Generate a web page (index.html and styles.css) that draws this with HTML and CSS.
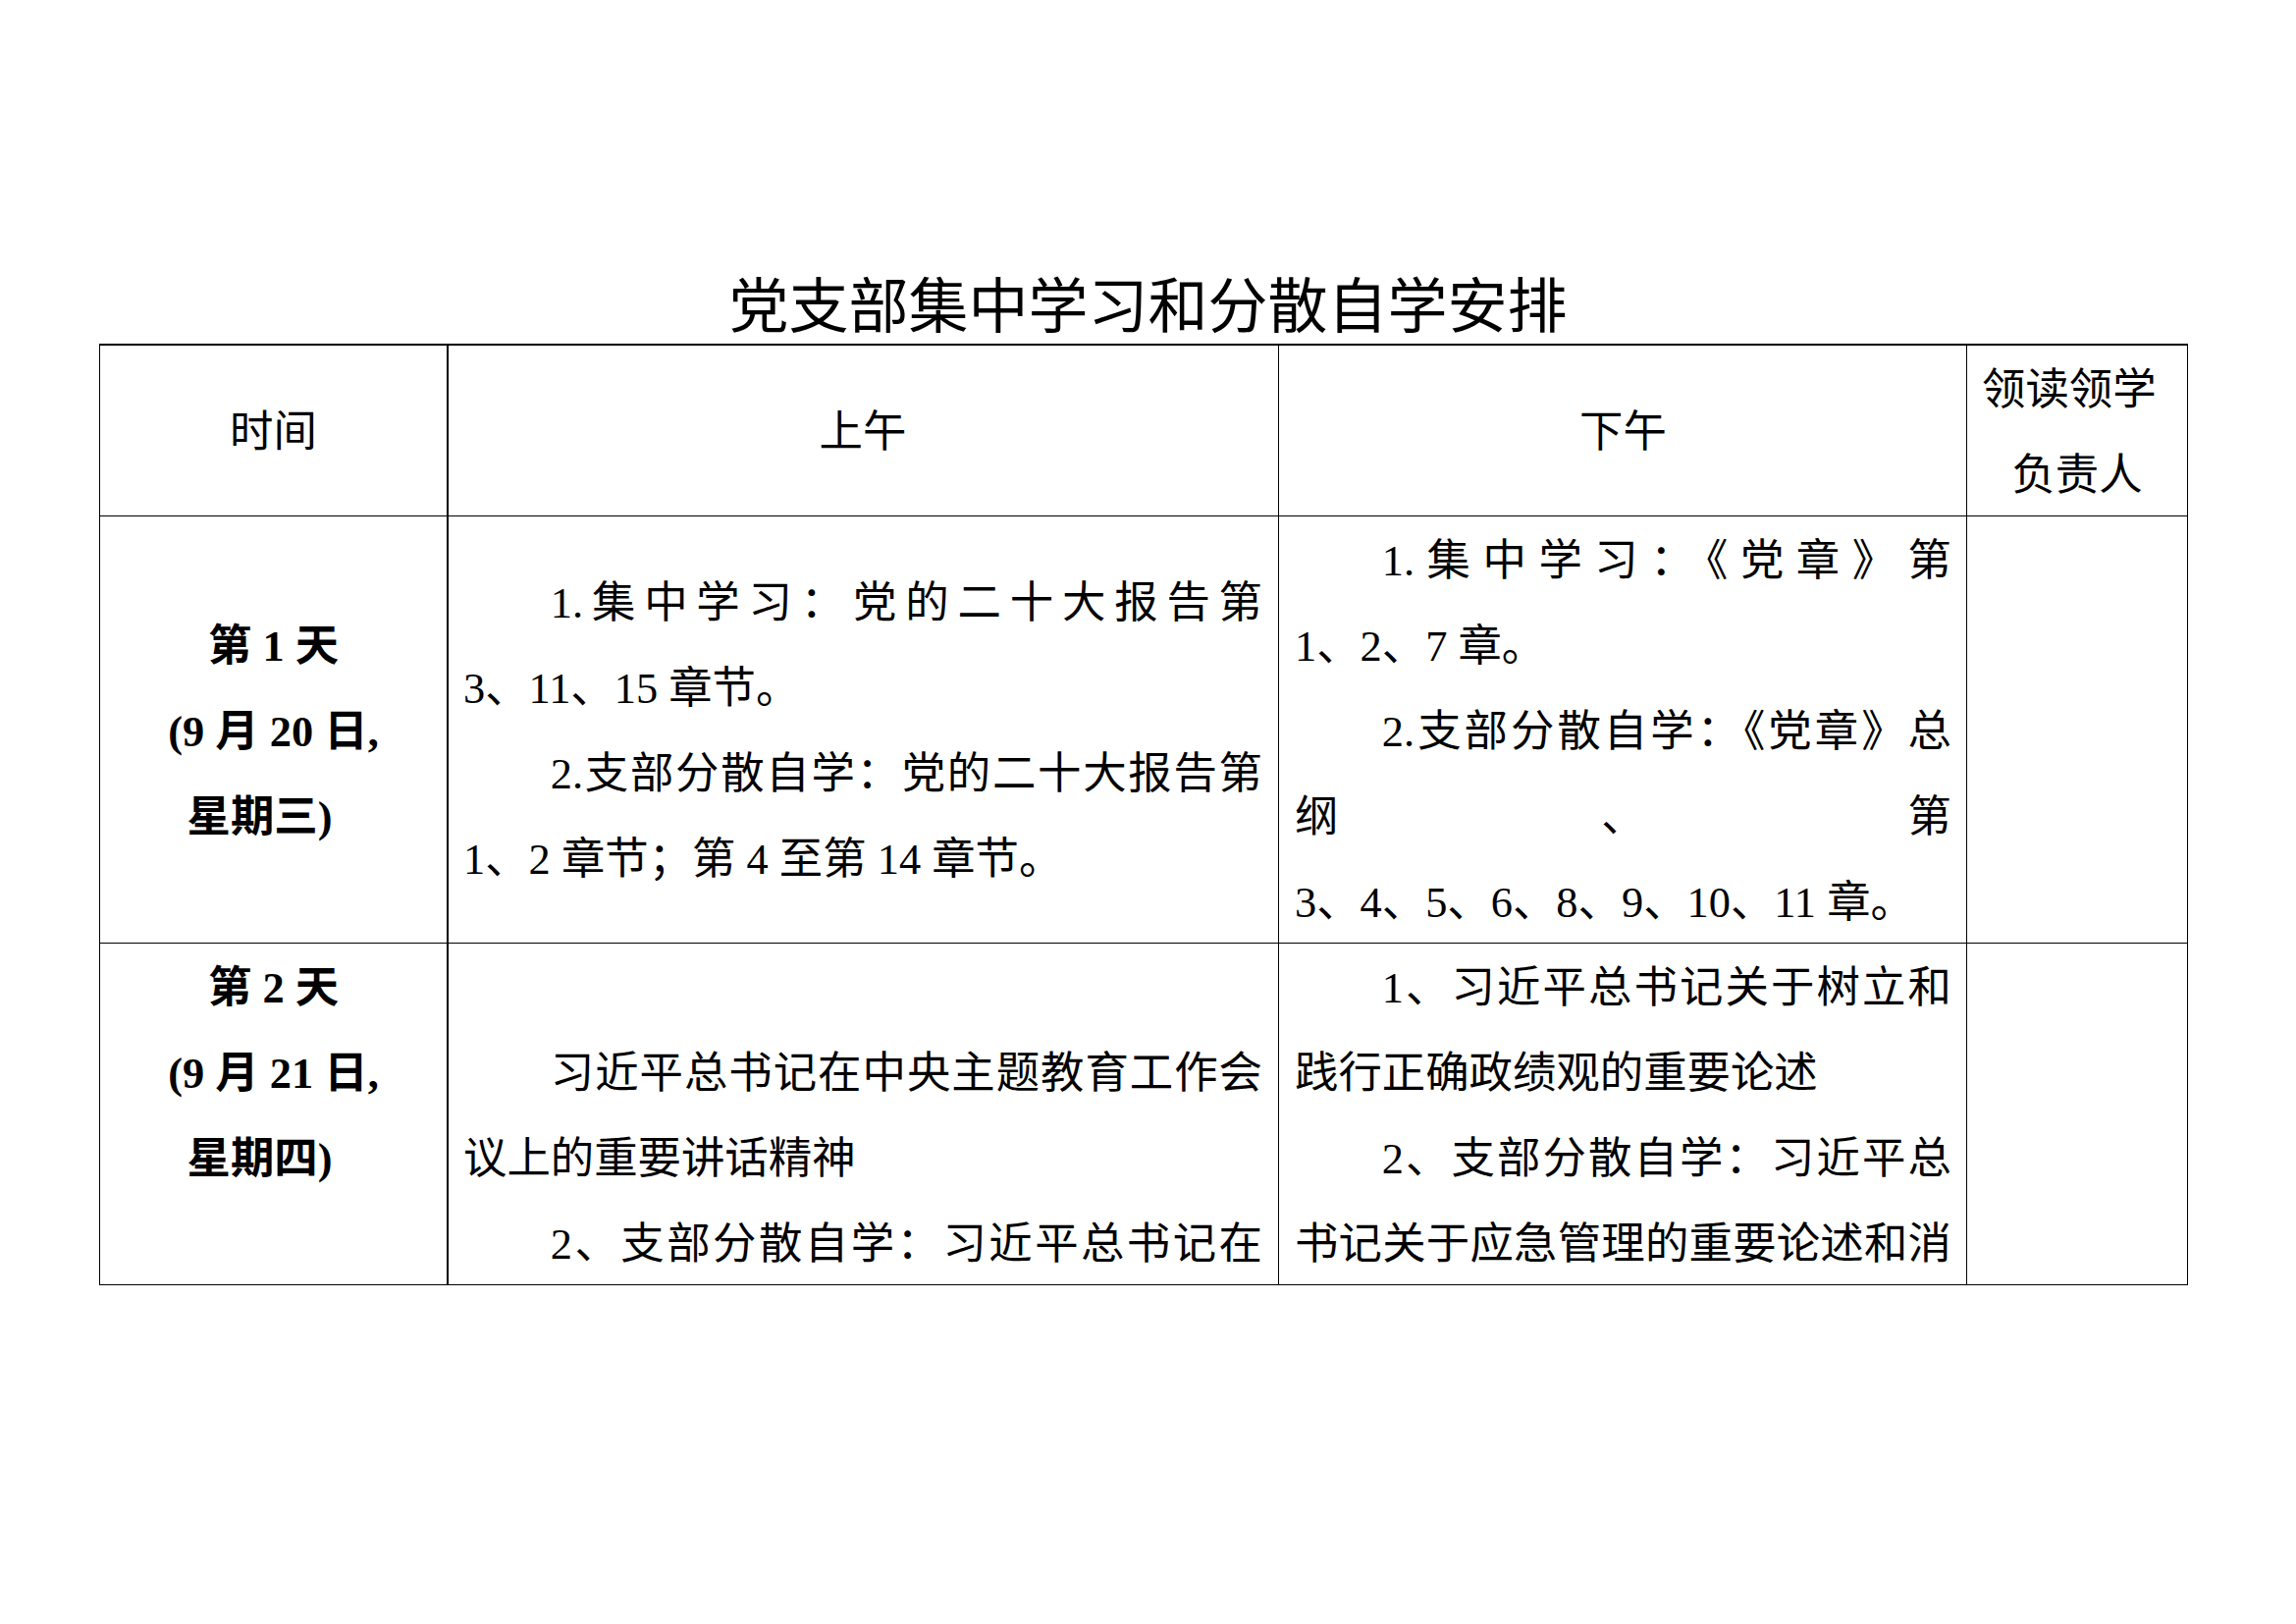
FILE: index.html
```html
<!DOCTYPE html>
<html lang="zh-CN">
<head>
<meta charset="utf-8">
<title>党支部集中学习和分散自学安排</title>
<link rel="stylesheet" href="styles.css">
</head>
<body>
<div class="doc">
  <h1 class="title">党支部集中学习和分散自学安排</h1>
  <div class="sheet">
    <div class="cell c1 head center"><div class="ln">时间</div></div>
    <div class="cell c2 head center"><div class="ln">上午</div></div>
    <div class="cell c3 head center"><div class="ln">下午</div></div>
    <div class="cell c4 head">
      <div class="ln left">领读领学</div>
      <div class="ln center">负责人</div>
    </div>

    <div class="cell c1 day center mid">
      <div class="ln">第 1 天</div>
      <div class="ln">(9 月 20 日,</div>
      <div class="ln shift">星期三)</div>
    </div>
    <div class="cell c2 mid">
      <div class="ln j ind">1.集中学习：党的二十大报告第</div>
      <div class="ln">3、11、15 章节。</div>
      <div class="ln j ind">2.支部分散自学：党的二十大报告第</div>
      <div class="ln">1、2 章节；第 4 至第 14 章节。</div>
    </div>
    <div class="cell c3 mid">
      <div class="ln j ind">1.集中学习：《党章》第</div>
      <div class="ln">1、2、7 章。</div>
      <div class="ln j ind">2.支部分散自学：《党章》总</div>
      <div class="ln j">纲、第</div>
      <div class="ln">3、4、5、6、8、9、10、11 章。</div>
    </div>
    <div class="cell c4"></div>

    <div class="cell c1 day center top">
      <div class="ln">第 2 天</div>
      <div class="ln">(9 月 21 日,</div>
      <div class="ln shift">星期四)</div>
    </div>
    <div class="cell c2 top">
      <div class="ln"></div>
      <div class="ln j ind">习近平总书记在中央主题教育工作会</div>
      <div class="ln">议上的重要讲话精神</div>
      <div class="ln j ind">2、支部分散自学：习近平总书记在</div>
    </div>
    <div class="cell c3 top">
      <div class="ln j ind">1、习近平总书记关于树立和</div>
      <div class="ln">践行正确政绩观的重要论述</div>
      <div class="ln j ind">2、支部分散自学：习近平总</div>
      <div class="ln j">书记关于应急管理的重要论述和消</div>
    </div>
    <div class="cell c4"></div>
  </div>
</div>
</body>
</html>
```

FILE: styles.css
```css
html, body {
  margin: 0;
  padding: 0;
  background: #ffffff;
}

body {
  width: 2339px;
  height: 1654px;
  color: #000000;
  font-family: "Liberation Serif", "Noto Sans CJK SC", serif;
}

.doc {
  padding-top: 263px;
}

.title {
  margin: 0;
  box-sizing: border-box;
  height: 87px;
  padding-top: 2px;
  line-height: 85px;
  text-align: center;
  font-family: "Noto Sans CJK SC", sans-serif;
  font-weight: 400;
  font-size: 61px;
}

.sheet {
  margin-left: 101px;
  width: 2128px;
  box-sizing: border-box;
  border-top: 2px solid #000;
  border-left: 1px solid #000;
  display: grid;
  grid-template-columns: 355px 846px 701px 225px;
  grid-template-rows: 174px 435px 348px;
}

.cell {
  box-sizing: border-box;
  border-right: 1px solid #000;
  border-bottom: 1px solid #000;
  display: flex;
  flex-direction: column;
  justify-content: center;
  overflow: hidden;
  font-size: 44.4px;
  line-height: 87px;
}

.cell.top {
  justify-content: flex-start;
}

.c1 {
  border-right-width: 2px;
  padding: 0 15px;
}

.c2 {
  padding: 0 16px 0 15px;
}

.c3 {
  padding: 0 15px 0 16px;
}

.c4 {
  padding: 0 15px;
}

.ln {
  box-sizing: border-box;
  height: 87px;
  padding-top: 4px;
  line-height: 83px;
  flex: none;
}

.center {
  text-align: center;
}

.left {
  text-align: left;
}

.j {
  text-align: justify;
  text-align-last: justify;
}

.ind {
  text-indent: 88.8px;
}

.day {
  font-weight: 700;
}

.shift {
  padding-right: 28px;
}
```
